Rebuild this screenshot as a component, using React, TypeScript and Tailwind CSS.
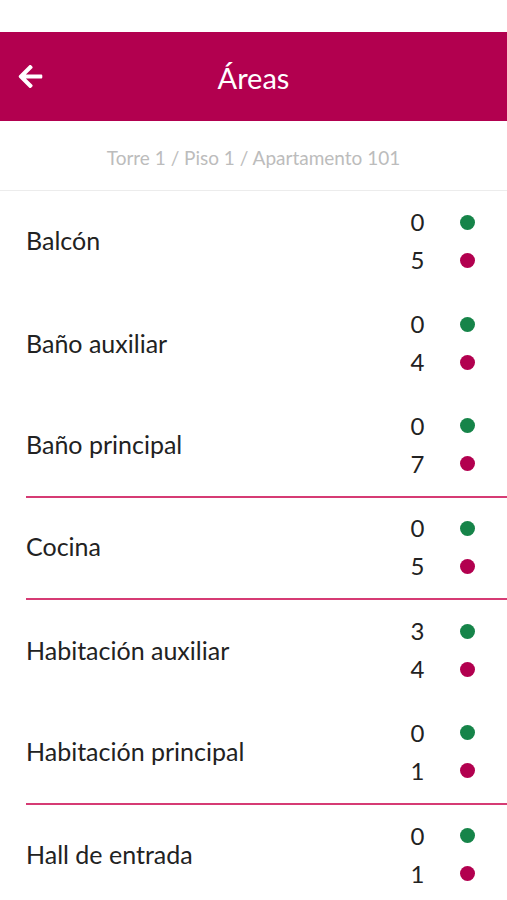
import { FaArrowLeft } from 'react-icons/fa'

interface Area {
  name: string
  ok: number
  pending: number
  divider?: boolean
}

const areas: Area[] = [
  { name: 'Balcón', ok: 0, pending: 5 },
  { name: 'Baño auxiliar', ok: 0, pending: 4 },
  { name: 'Baño principal', ok: 0, pending: 7, divider: true },
  { name: 'Cocina', ok: 0, pending: 5, divider: true },
  { name: 'Habitación auxiliar', ok: 3, pending: 4 },
  { name: 'Habitación principal', ok: 0, pending: 1, divider: true },
  { name: 'Hall de entrada', ok: 0, pending: 1 },
]

function AreaRow({ area }: { area: Area }) {
  return (
    <div className="pl-[26px]">
      <div
        className={`flex items-center justify-between h-[102.3px] pr-[32px] ${
          area.divider ? 'border-b-2 border-[#d63b74]' : ''
        }`}
      >
        <span className="text-[25px] text-[#222] -mt-[2px]">{area.name}</span>
        <div className="flex flex-col gap-[12px] -mt-[2px]">
          <div className="flex items-center gap-[34px]">
            <span className="w-[17px] text-center text-[24px] leading-[26px] text-[#222]">{area.ok}</span>
            <span className="w-[15px] h-[15px] rounded-full bg-[#168449]" />
          </div>
          <div className="flex items-center gap-[34px]">
            <span className="w-[17px] text-center text-[24px] leading-[26px] text-[#222]">{area.pending}</span>
            <span className="w-[15px] h-[15px] rounded-full bg-[#b2004f]" />
          </div>
        </div>
      </div>
    </div>
  )
}

export default function App() {
  return (
    <div className="w-[507px] h-[900px] overflow-hidden bg-white font-['Lato','Liberation_Sans',sans-serif]">
      <div className="h-[32px]" />
      {/* Barra superior */}
      <div className="relative flex items-center justify-center h-[89px] bg-[#b2004f]">
        <FaArrowLeft className="absolute left-[17px] text-white w-[27px] h-[27px]" />
        <h1 className="text-white text-[29px] mt-[2px]">Áreas</h1>
      </div>

      <div className="flex items-center justify-center h-[70px] border-b border-[#ececec]">
        <p className="text-[#bcbcbc] text-[19px] mt-[6px]">Torre 1 / Piso 1 / Apartamento 101</p>
      </div>

      {areas.map((a) => (
        <AreaRow key={a.name} area={a} />
      ))}
    </div>
  )
}
